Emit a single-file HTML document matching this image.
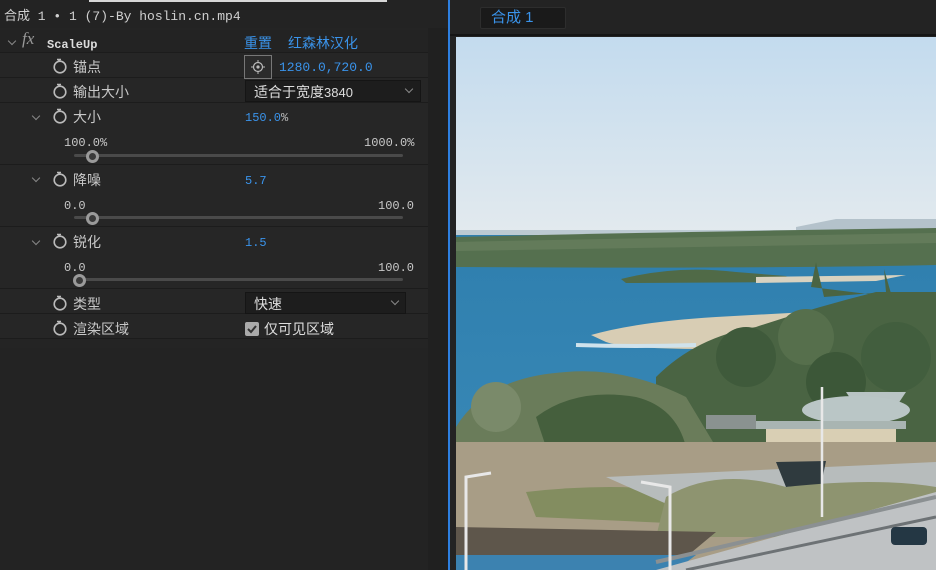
<!DOCTYPE html>
<html><head><meta charset="utf-8"><style>
*{margin:0;padding:0;box-sizing:border-box}
body{width:936px;height:570px;background:#232323;position:relative;overflow:hidden;font-family:"Liberation Sans","Noto Sans CJK SC",sans-serif;color:#c8c8c8}
.a{position:absolute}
.row{position:absolute;left:0;width:428px;background:#262626;border-bottom:1px solid #1c1c1c}
.t{position:absolute;font-size:14px;line-height:16px;white-space:nowrap}
.m{font-family:"Liberation Mono","Noto Sans CJK SC",monospace;font-size:12px}
.blue{color:#3a93ea}
.track{position:absolute;height:3px;background:#4a4a4a;border-radius:2px;left:74px;width:329px}
.knob{position:absolute;width:13px;height:13px;border:3px solid #9a9a9a;border-radius:50%;background:#3a3a3a}
.chev{position:absolute;width:6px;height:6px;border-right:1px solid #888;border-bottom:1px solid #888;transform:rotate(45deg)}
.dd{position:absolute;background:#1d1d1d;border:1px solid #151515}
</style></head><body>
<div class="a" style="left:89px;top:0;width:298px;height:2px;background:#d8d8d8"></div>
<div class="t m" style="left:4px;top:9px;font-size:13px;color:#d0d0d0">合成 1 • 1 (7)-By hoslin.cn.mp4</div>
<div class="a" style="left:0;top:28px;width:428px;height:320px;background:#242424"></div>
<div class="a" style="left:428px;top:28px;width:20px;height:542px;background:#202020"></div>
<div class="a" style="left:448px;top:0;width:2px;height:570px;background:#2d7fe0"></div>

<div class="row" style="top:30px;height:23px;background:#232323"></div>
<div class="chev" style="left:9px;top:38px"></div>
<div class="t" style="left:22px;top:31px;font-family:'Liberation Serif',serif;font-style:italic;font-size:17px;color:#999">fx</div>
<div class="t m" style="left:47px;top:37px;font-weight:bold;font-size:12px;color:#ddd">ScaleUp</div>
<div class="t blue" style="left:244px;top:35px">重置</div>
<div class="t blue" style="left:288px;top:35px">红森林汉化</div>

<div class="row" style="top:53px;height:25px"></div>
<div class="row" style="top:78px;height:25px"></div>
<div class="row" style="top:103px;height:62px"></div>
<div class="row" style="top:165px;height:62px"></div>
<div class="row" style="top:227px;height:62px"></div>
<div class="row" style="top:289px;height:25px"></div>
<div class="row" style="top:314px;height:25px"></div>

<svg class="a" style="left:52px;top:0" width="18" height="340">
<g fill="none" stroke="#bbb" stroke-width="1.6">
<g transform="translate(0,58)"><circle cx="8" cy="9" r="5.8"/><path d="M5 1.5h4M7 1.5v2.5"/></g>
<g transform="translate(0,83)"><circle cx="8" cy="9" r="5.8"/><path d="M5 1.5h4M7 1.5v2.5"/></g>
<g transform="translate(0,108)"><circle cx="8" cy="9" r="5.8"/><path d="M5 1.5h4M7 1.5v2.5"/></g>
<g transform="translate(0,171)"><circle cx="8" cy="9" r="5.8"/><path d="M5 1.5h4M7 1.5v2.5"/></g>
<g transform="translate(0,233)"><circle cx="8" cy="9" r="5.8"/><path d="M5 1.5h4M7 1.5v2.5"/></g>
<g transform="translate(0,295)"><circle cx="8" cy="9" r="5.8"/><path d="M5 1.5h4M7 1.5v2.5"/></g>
<g transform="translate(0,320)"><circle cx="8" cy="9" r="5.8"/><path d="M5 1.5h4M7 1.5v2.5"/></g>
</g></svg>
<div class="chev" style="left:33px;top:113px"></div>
<div class="chev" style="left:33px;top:175px"></div>
<div class="chev" style="left:33px;top:238px"></div>

<div class="t" style="left:73px;top:59px">锚点</div>
<div class="t" style="left:73px;top:84px">输出大小</div>
<div class="t" style="left:73px;top:109px">大小</div>
<div class="t" style="left:73px;top:172px">降噪</div>
<div class="t" style="left:73px;top:234px">锐化</div>
<div class="t" style="left:73px;top:296px">类型</div>
<div class="t" style="left:73px;top:321px">渲染区域</div>

<div class="a" style="left:244px;top:55px;width:28px;height:24px;border:1px solid #777;background:#2b2b2b"></div>
<svg class="a" style="left:250px;top:59px" width="16" height="16"><circle cx="8" cy="8" r="4.5" fill="none" stroke="#bbb" stroke-width="1.2"/><circle cx="8" cy="8" r="1.6" fill="#bbb"/><path d="M1 8h3M12 8h3M8 1v3M8 12v3" stroke="#bbb"/></svg>
<div class="t m blue" style="left:279px;top:60px;font-size:13px">1280.0,720.0</div>

<div class="dd" style="left:245px;top:80px;width:176px;height:22px"></div>
<div class="t" style="left:254px;top:84px;color:#ddd">适合于宽度<span style="font-size:13px">3840</span></div>
<div class="chev" style="left:406px;top:86px"></div>

<div class="t m blue" style="left:245px;top:110px">150.0<span style="color:#bbb">%</span></div>
<div class="t m" style="left:64px;top:135px">100.0%</div>
<div class="t m" style="left:364px;top:135px">1000.0%</div>
<div class="track" style="top:154px"></div><div class="knob" style="left:86px;top:150px"></div>

<div class="t m blue" style="left:245px;top:173px">5.7</div>
<div class="t m" style="left:64px;top:198px">0.0</div>
<div class="t m" style="left:378px;top:198px">100.0</div>
<div class="track" style="top:216px"></div><div class="knob" style="left:86px;top:212px"></div>

<div class="t m blue" style="left:245px;top:235px">1.5</div>
<div class="t m" style="left:64px;top:260px">0.0</div>
<div class="t m" style="left:378px;top:260px">100.0</div>
<div class="track" style="top:278px"></div><div class="knob" style="left:73px;top:274px"></div>

<div class="dd" style="left:245px;top:292px;width:161px;height:22px"></div>
<div class="t" style="left:254px;top:296px;color:#ddd">快速</div>
<div class="chev" style="left:392px;top:298px"></div>

<div class="a" style="left:245px;top:322px;width:14px;height:14px;background:#aaa;border-radius:2px"></div>
<svg class="a" style="left:245px;top:322px" width="14" height="14"><path d="M3 7l3 3 5-6" stroke="#333" stroke-width="2" fill="none"/></svg>
<div class="t" style="left:264px;top:321px;color:#ddd">仅可见区域</div>

<div class="a" style="left:450px;top:0;width:486px;height:36px;background:#232323;border-bottom:2px solid #151515"></div>
<div class="a" style="left:480px;top:7px;width:86px;height:22px;background:#1a1a1a;border:1px solid #2d2d2d;border-radius:2px"></div>
<div class="t blue" style="left:491px;top:10px;font-size:15px">合成 1</div>

<svg class="a" style="left:456px;top:37px" width="480" height="533" viewBox="0 0 480 533">
<defs>
<linearGradient id="sky" x1="0" y1="0" x2="0" y2="1"><stop offset="0" stop-color="#c3dbee"/><stop offset="1" stop-color="#e3eaee"/></linearGradient>
<linearGradient id="wat" x1="0" y1="0" x2="0" y2="1"><stop offset="0" stop-color="#2f7fae"/><stop offset="1" stop-color="#3a8ab8"/></linearGradient>
</defs>
<rect width="480" height="200" fill="url(#sky)"/>
<path d="M340 190 L380 182 L480 182 L480 200 L340 200Z" fill="#b4c2cb"/>
<rect y="193" width="480" height="10" fill="#bccad2"/>
<rect y="198" width="480" height="300" fill="url(#wat)"/>
<path d="M0 200 Q200 195 480 191 L480 228 Q300 232 0 230Z" fill="#55704f"/>
<path d="M0 205 Q240 200 480 196 L480 206 Q240 210 0 214Z" fill="#6a805f" opacity=".7"/>
<path d="M165 242 Q220 228 280 235 L330 239 L340 245 L170 246Z" fill="#506a47"/>
<path d="M300 240 L450 238 L420 244 L300 246Z" fill="#d8d2c0"/>
<path d="M135 298 Q180 285 260 280 L480 268 L480 300 L360 306 L250 312 Q170 312 150 305Z" fill="#d8cdb4"/>
<path d="M120 308 Q180 310 240 308" stroke="#cfe2ec" stroke-width="4" fill="none"/>
<path d="M200 340 Q240 300 300 290 Q360 270 420 255 L480 255 L480 410 L200 410Z" fill="#4a6443"/>
<circle cx="290" cy="320" r="30" fill="#3f5a3b"/>
<circle cx="350" cy="300" r="28" fill="#566f4c"/>
<circle cx="440" cy="320" r="35" fill="#425e3e"/>
<circle cx="380" cy="345" r="30" fill="#3c5738"/>
<path d="M355 250 L360 225 L368 260 L430 255 L428 232 L436 260Z" fill="#4a6443"/>
<path d="M0 390 Q30 340 110 335 Q170 330 230 360 L260 410 L0 420Z" fill="#6a7c5a"/>
<path d="M80 380 Q120 350 180 360 Q220 370 230 410 L90 410Z" fill="#455f3d"/>
<circle cx="40" cy="370" r="25" fill="#7a8a6a"/>
<path d="M390 355 L450 355 L440 370 L400 370Z" fill="#b9c4c4"/>
<ellipse cx="400" cy="373" rx="54" ry="14" fill="#bac6c6"/>
<rect x="310" y="389" width="130" height="32" fill="#d9cfb4"/>
<rect x="300" y="384" width="150" height="8" fill="#a9b5b2"/>
<rect x="250" y="378" width="50" height="14" fill="#8a9290"/>
<rect x="0" y="405" width="480" height="128" fill="#a89d86"/>
<path d="M70 455 Q200 440 300 470 L300 490 L80 480Z" fill="#838d60"/>
<path d="M150 440 L480 425 L480 470 L240 480Z" fill="#b7bcbc"/>
<path d="M320 425 L370 424 L365 448 L330 450Z" fill="#2f3a3e"/>
<path d="M210 460 Q260 430 330 450 Q420 440 480 450 L480 500 L200 500Z" fill="#8e9470"/>
<path d="M0 490 L260 495 L230 520 L0 520Z" fill="#5e564b"/>
<path d="M0 518 L240 518 L220 533 L0 533Z" fill="#3c82b0"/>
<path d="M200 533 L480 455 L480 533Z" fill="#bfc2c4"/>
<path d="M200 525 L480 460" stroke="#8b9092" stroke-width="4"/>
<path d="M230 533 L480 480" stroke="#6d7275" stroke-width="3"/>
<rect x="435" y="490" width="36" height="18" rx="4" fill="#243744"/>
<path d="M10 533 V440 L35 436" stroke="#e8e8e8" stroke-width="3" fill="none"/>
<path d="M214 533 V450 L185 445" stroke="#e8e8e8" stroke-width="3" fill="none"/>
<path d="M366 480 V350" stroke="#e8e8e8" stroke-width="2.5"/>
</svg>
</body></html>
